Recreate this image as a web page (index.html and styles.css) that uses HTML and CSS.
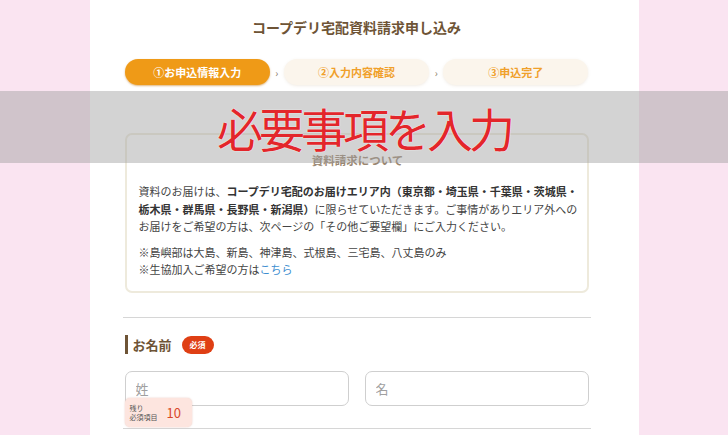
FILE: index.html
```html
<!DOCTYPE html>
<html lang="ja">
<head>
  <meta charset="UTF-8" />
  <meta name="viewport" content="width=device-width, initial-scale=1.0" />
  <title>コープデリ宅配資料請求申し込み</title>
  <link rel="stylesheet" href="styles.css">
</head>
<body>
  <div class="page">
    <h1 class="page-title">コープデリ宅配資料請求申し込み</h1>

    <ol class="steps">
      <li class="step active">①お申込情報入力</li>
      <li class="step-arrow">›</li>
      <li class="step">②入力内容確認</li>
      <li class="step-arrow">›</li>
      <li class="step">③申込完了</li>
    </ol>

    <div class="info-box">
      <h2>資料請求について</h2>
      <p>資料のお届けは、<b>コープデリ宅配のお届けエリア内（東京都・埼玉県・千葉県・茨城県・<br>栃木県・群馬県・長野県・新潟県）</b>に限らせていただきます。ご事情がありエリア外への<br>お届けをご希望の方は、次ページの「その他ご要望欄」にご入力ください。</p>
      <p>※島嶼部は大島、新島、神津島、式根島、三宅島、八丈島のみ<br>※生協加入ご希望の方は<a href="#">こちら</a></p>
    </div>

    <div class="field">
      <div class="field-label">お名前 <span class="required">必須</span></div>
      <div class="field-inputs">
        <input type="text" placeholder="姓">
        <input type="text" placeholder="名">
      </div>
    </div>

    <div class="remaining">
      <span class="remaining-label">残り<br>必須項目</span>
      <span class="remaining-count">10</span>
    </div>
  </div>

  <div class="banner">必要事項を入力</div>
</body>
</html>
```

FILE: styles.css
```css
body {
  margin: 0;
  background-color: #fae4f1;
  font-family: "Noto Sans CJK JP", "Noto Sans", sans-serif;
  color: #444;
  height: 435px;
  overflow: hidden;
}
.page {
  position: relative;
  width: 549px;
  height: 435px;
  margin: 0 auto;
  padding: 17px 50px 0 35px;
  box-sizing: border-box;
  background-color: #fff;
}
.page-title {
  margin: 0;
  text-align: center;
  font-size: 14px;
  line-height: 20px;
  color: #6e5436;
}
.steps {
  display: grid;
  grid-template-columns: 1fr 14px 1fr 14px 1fr;
  align-items: center;
  list-style: none;
  margin: 22px 0 0;
  padding: 0;
}
.step {
  height: 26px;
  line-height: 26px;
  border-radius: 13px;
  text-align: center;
  font-size: 11px;
  font-weight: bold;
  color: #f0a02a;
  background-color: #fbf5ec;
  box-shadow: 0 1px 3px rgba(160, 130, 80, 0.15);
}
.step.active {
  color: #fff;
  background-color: #ef9a17;
  box-shadow: 0 1px 2px rgba(190, 110, 0, 0.5);
}
.step-arrow {
  text-align: center;
  font-size: 10px;
  color: #8a7a66;
}
.info-box {
  margin-top: 48px;
  height: 160px;
  box-sizing: border-box;
  border: 2px solid #eeeadc;
  border-radius: 7px;
  padding: 17px 10px 0 12px;
}
.info-box h2 {
  margin: 0 0 15px;
  text-align: center;
  font-size: 11.5px;
  line-height: 16px;
  color: #9a8670;
}
.info-box p {
  margin: 0 0 8px;
  font-size: 11px;
  line-height: 17.5px;
  white-space: nowrap;
}
.info-box b {
  color: #333;
}
.info-box a {
  color: #3e8ed0;
  text-decoration: none;
}
.field {
  margin-top: 24px;
  border-top: 1px solid #d6d6d6;
  border-bottom: 1px solid #d6d6d6;
  margin-left: -2px;
  margin-right: -2px;
  padding: 17px 2px 22px;
}
.field-label {
  display: flex;
  align-items: center;
  gap: 10px;
  height: 19px;
  border-left: 3px solid #6e5436;
  padding-left: 5px;
  font-size: 13px;
  font-weight: bold;
  color: #6e5436;
}
.required {
  display: inline-block;
  padding: 0 8px;
  height: 18px;
  line-height: 18px;
  border-radius: 9px;
  background-color: #df3f14;
  color: #fff;
  font-size: 8px;
}
.field-inputs {
  display: grid;
  grid-template-columns: 1fr 1fr;
  gap: 16px;
  margin-top: 17px;
}
.field-inputs input {
  height: 35px;
  box-sizing: border-box;
  border: 1px solid #cfcfcf;
  border-radius: 7px;
  padding: 0 10px;
  font-family: inherit;
  font-size: 13px;
  color: #444;
}
.field-inputs input::placeholder {
  color: #a0a0a0;
}
.remaining {
  position: absolute;
  left: 35px;
  top: 398px;
  display: flex;
  align-items: center;
  gap: 9px;
  width: 67px;
  height: 29px;
  box-sizing: border-box;
  padding: 0 5px;
  border-radius: 5px;
  background-color: #fde5df;
  box-shadow: 0 0 2px rgba(200, 120, 100, 0.4);
}
.remaining-label {
  font-size: 7px;
  line-height: 9px;
  color: #555;
}
.remaining-count {
  font-size: 13px;
  color: #d9482a;
}
.banner {
  position: absolute;
  left: 0;
  right: 0;
  top: 91px;
  height: 72px;
  background-color: rgba(160, 160, 160, 0.46);
  text-align: center;
  font-size: 46px;
  line-height: 72px;
  letter-spacing: -4px;
  font-weight: 400;
  color: #e3262b;
  text-shadow: 0 0 1px #fff, 0 0 1px #fff;
}
```
